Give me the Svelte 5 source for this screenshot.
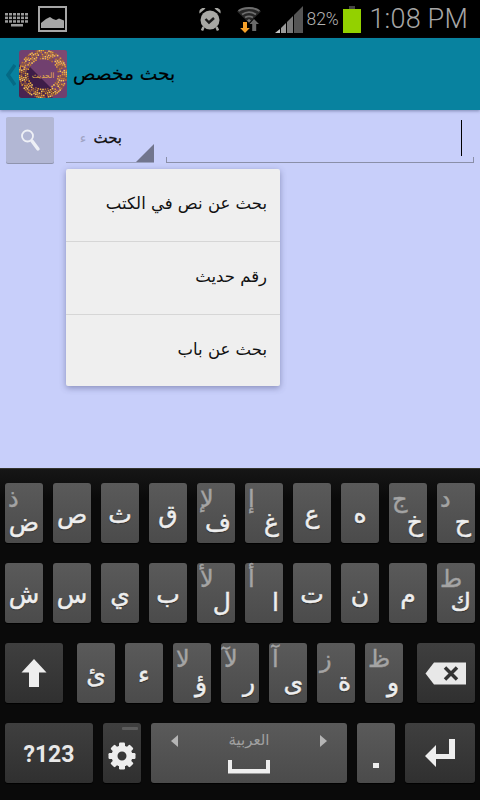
<script>
  const row1 = [['ض','ذ'],['ص'],['ث'],['ق'],['ف','لإ'],['غ','إ'],['ع'],['ه'],['خ','ج'],['ح','د']];
  const row2 = [['ش'],['س'],['ي'],['ب'],['ل','لأ'],['ا','أ'],['ت'],['ن'],['م'],['ك','ط']];
  const row3 = [['ئ'],['ء'],['ؤ','لا'],['ر','لآ'],['ى','آ'],['ة','ز'],['و','ظ']];
  const items = ['بحث عن نص في الكتب','رقم حديث','بحث عن باب'];
  const dots = [];
  const golds = ['#f7c65a', '#e09a30', '#c27a2e', '#f2b13f', '#8f5a3a'];
  for (let r = 0; r < 5; r++) {
    const rad = 15.5 + r * 2;
    const n = 40 + r * 9;
    for (let i = 0; i < n; i++) {
      if ((i * 13 + r * 5) % 7 === 0) continue;
      const a = (i / n) * Math.PI * 2 + r * 0.23;
      dots.push({
        x: 24 + Math.cos(a) * rad,
        y: 24 + Math.sin(a) * rad,
        c: golds[(i * 3 + r * 2) % 5]
      });
    }
  }
</script>

<div class="page">
  <div class="status">
    <svg class="kbd-ic" width="24" height="14" viewBox="0 0 24 14">
      <g fill="#9a9a9a">
        {#each [0,1,2,3,4,5] as i}
          <rect x={i * 4} y="0" width="3" height="2.500"/>
          <rect x={i * 4} y="3.600" width="3" height="2.500"/>
          <rect x={i * 4} y="7.200" width="3" height="2.500"/>
        {/each}
        <rect x="6" y="11" width="12" height="2.500"/>
      </g>
    </svg>
    <svg class="pic-ic" width="29" height="26" viewBox="0 0 29 26">
      <rect x="1" y="1" width="27" height="24" fill="none" stroke="#a6a6a6" stroke-width="2"/>
      <path d="M3 22V17L8 13L12 11L15 13L18 14L21 12.500L26 14.500V22Z" fill="#a6a6a6"/>
    </svg>
    <div class="spacer"></div>
    <svg class="alarm" width="24" height="26" viewBox="0 0 24 26">
      <path d="M1.500 7.500C0.500 3.500 4 1 7.500 2.500ZM22.500 7.500C23.500 3.500 20 1 16.500 2.500Z" fill="#a8a8a4"/>
      <circle cx="12" cy="14" r="9.500" fill="#a8a8a4"/>
      <path d="M7.500 13L11 16.500L16 12" fill="none" stroke="#1a1a1a" stroke-width="2.400"/>
      <path d="M5.500 21L4 24.500M18.500 21L20 24.500" stroke="#a8a8a4" stroke-width="2.500"/>
    </svg>
    <svg class="wifi" width="26" height="28" viewBox="0 0 26 28">
      <path d="M1 5.500C7 -0.500 19 -0.500 25 5.500L13 17Z" fill="#262626"/>
      <g fill="none" stroke="#6e6e6e" stroke-width="1.800">
        <path d="M2.500 5C8 1 18 1 23.500 5"/>
        <path d="M6 8.500C10.500 5.500 15.500 5.500 20 8.500"/>
        <path d="M9 11.500C11.500 10 14.500 10 17 11.500"/>
      </g>
      <path d="M11 14.500L13 13L15 14.500L13 16.500Z" fill="#777"/>
      <path d="M18 13L23 18H20.200V25H16.200V18H13.500Z" fill="#6a6a6a"/>
      <path d="M7 16H11V22H13.800L9 27L4.200 22H7Z" fill="#f5a02a"/>
    </svg>
    <svg class="signal" width="28" height="28" viewBox="0 0 28 28">
      <path d="M28 0V27H19V9Z" fill="#555"/>
      <path d="M18 10V27H12V16Z" fill="#7a7a7a"/>
      <path d="M11 17V27H6V22Z" fill="#9a9a9a"/>
      <path d="M5 23V27H0Z" fill="#c4c4c4"/>
    </svg>
    <span class="pct">82%</span>
    <div class="battery"><i></i><b></b></div>
    <span class="time">1:08 PM</span>
  </div>

  <div class="header">
    <svg class="back" width="10" height="22" viewBox="0 0 10 22">
      <path d="M9 1L2 11L9 21" fill="none" stroke="#056a85" stroke-width="3.500"/>
    </svg>
    <svg class="logo" width="48" height="48" viewBox="0 0 48 48">
      <rect width="48" height="48" rx="3" fill="#71406f"/>
      <path d="M0 14L34 48H3A3 3 0 0 1 0 45Z" fill="#4a2450"/>
      <path d="M10 16L38 44L20 44L4 28Z" fill="#3d1d48"/>
      <path d="M26 0H45A3 3 0 0 1 48 3V24Z" fill="#7e4a72"/>
      {#each dots as d}
        <rect x={d.x - 0.8} y={d.y - 0.8} width="1.600" height="1.600" fill={d.c}/>
      {/each}
      <text x="24" y="28" text-anchor="middle" class="logotext">الحديث</text>
    </svg>
    <span class="title" dir="rtl">بحث مخصص</span>
  </div>

  <div class="content">
    <div class="searchrow">
      <div class="searchbtn">
        <svg width="30" height="32" viewBox="0 0 30 32">
          <circle cx="12.500" cy="12" r="5.500" fill="none" stroke="#eef0f6" stroke-width="1.800"/>
          <path d="M17 17L23 25" stroke="#eef0f6" stroke-width="3.400" stroke-linecap="round"/>
        </svg>
      </div>
      <div class="spinner">
        <span class="spin-text"><span class="fade">ء</span><span class="spin-main">بحث</span></span>
        <div class="tri"></div>
      </div>
      <div class="input"><div class="cursor"></div></div>
    </div>
    <div class="menu" dir="rtl">
      {#each items as it}
        <div class="item">{it}</div>
      {/each}
    </div>
  </div>

  <div class="keyboard">
    <div class="row">
      {#each row1 as k}
        <div class="key" class:hinted={k[1]}>
          {#if k[1]}<span class="hint">{k[1]}</span>{/if}
          <span class="main">{k[0]}</span>
        </div>
      {/each}
    </div>
    <div class="row">
      {#each row2 as k}
        <div class="key" class:hinted={k[1]}>
          {#if k[1]}<span class="hint">{k[1]}</span>{/if}
          <span class="main">{k[0]}</span>
        </div>
      {/each}
    </div>
    <div class="row gap3">
      <div class="key fn shift">
        <svg width="26" height="30" viewBox="0 0 26 30"><path d="M13 1L25.500 14.500H18V29H8V14.500H0.500Z" fill="#eeeeee"/></svg>
      </div>
      <div class="trio">
        {#each row3 as k}
          <div class="key" class:hinted={k[1]}>
            {#if k[1]}<span class="hint">{k[1]}</span>{/if}
            <span class="main">{k[0]}</span>
          </div>
        {/each}
      </div>
      <div class="key fn shift del">
        <svg width="42" height="24" viewBox="0 0 42 24">
          <path d="M9 0.500H41V22.500H9L0.500 11.500Z" fill="#e8e8e8"/>
          <path d="M20 5.500L32 17.500M32 5.500L20 17.500" stroke="#333" stroke-width="3.500"/>
        </svg>
      </div>
    </div>
    <div class="row">
      <div class="key fn sym">?123</div>
      <div class="key fn gear">
        <i class="dash"></i>
        <svg width="28" height="28" viewBox="0 0 28 28">
          <g fill="#eee">
            {#each [0,45,90,135,180,225,270,315] as a}
              <rect x="11" y="0.500" width="6" height="7" rx="1.200" transform="rotate({a} 14 14)"/>
            {/each}
          </g>
          <circle cx="14" cy="14" r="7.500" fill="none" stroke="#eee" stroke-width="6"/>
        </svg>
      </div>
      <div class="key space">
        <svg class="arrow l" width="7" height="12" viewBox="0 0 7 12"><path d="M7 0V12L0 6Z" fill="#b5b5b5"/></svg>
        <span class="lang">العربية</span>
        <svg class="arrow r" width="7" height="12" viewBox="0 0 7 12"><path d="M0 0V12L7 6Z" fill="#b5b5b5"/></svg>
        <svg class="bar" width="42" height="14" viewBox="0 0 42 14"><path d="M0 0H4V9H38V0H42V13.500H0Z" fill="#eee"/></svg>
      </div>
      <div class="key dot"><i></i></div>
      <div class="key fn enter">
        <svg width="32" height="28" viewBox="0 0 32 28">
          <path d="M25 0H31V20H12V28L1 17L12 6V15H25Z" fill="#eee"/>
        </svg>
      </div>
    </div>
  </div>
</div>

<style>
  :global(body) { margin: 0; background: #000; }
  .page {
    width: 480px; height: 800px; display: flex; flex-direction: column; overflow: hidden;
    font-family: "DejaVu Sans", sans-serif;
  }
  .status {
    height: 38px; flex: none; background: #000; display: flex; align-items: center;
    padding: 0 12px 0 5px; box-sizing: border-box;
  }
  .kbd-ic { margin-right: 9px; margin-top: 1px; }
  .spacer { flex: 1; }
  .alarm { margin-right: 14px; }
  .wifi { margin-right: 13px; margin-top: 2px; }
  .signal { margin-right: 3px; margin-top: 1px; }
  .pct { font: 300 17.500px Roboto, sans-serif; color: #b2b2b2; width: 37px; }
  .battery { width: 18px; height: 27px; display: flex; flex-direction: column; align-items: center; margin-right: 8px; }
  .battery i { width: 6px; height: 3px; background: #444; display: block; }
  .battery b { width: 18px; flex: 1; background: #93d100; display: block; }
  .time { font: 300 27px Roboto, sans-serif; color: #a6a6a6; letter-spacing: 0.2px; white-space: nowrap; }

  .header {
    height: 72px; flex: none; background: #08829f; display: flex; align-items: center;
    padding-left: 6px; box-sizing: border-box; position: relative; z-index: 1;
    box-shadow: 0 1px 3px rgba(40, 50, 90, .45);
  }
  .back { margin-right: 3px; margin-top: 2px; }
  .logo { margin-right: 6px; }
  .logotext { font-size: 7.500px; fill: #e8b04a; }
  .title { font-size: 18.600px; color: #000; line-height: 1; -webkit-text-stroke: 0.2px #000; }

  .content { flex: 1; background: #c8cffa; position: relative; padding: 7px 6px 0; box-sizing: border-box; }
  .searchrow { display: flex; align-items: flex-start; }
  .searchbtn {
    width: 48px; height: 46px; background: #b2b7d4; border-radius: 2px; flex: none;
    box-shadow: 0 1px 0 #8f94ad; display: flex; align-items: center; justify-content: center;
  }
  .spinner {
    width: 88px; height: 46px; margin-left: 12px; flex: none; border-bottom: 1px solid #9aa0bf;
    box-sizing: border-box; position: relative; display: flex; align-items: center; justify-content: flex-end;
    padding: 0 32px 4px 0;
  }
  .spin-text { display: flex; align-items: center; gap: 7px; font-size: 15px; white-space: nowrap; }
  .spin-main { color: #111; -webkit-text-stroke: 0.3px #111; }
  .fade { color: #a0a4c4; font-size: 14px; }
  .tri {
    position: absolute; right: 0; bottom: 0; width: 0; height: 0;
    border-left: 18px solid transparent; border-bottom: 18px solid #71758d;
  }
  .input {
    flex: 1; height: 46px; margin-left: 12px; position: relative; box-sizing: border-box;
    border: 1px solid #8a8fa8; border-top: 0;
  }
  .input::before {
    content: ""; position: absolute; left: -1px; right: -1px; top: 0; height: 40px; background: #c8cffa;
  }
  .cursor { position: absolute; right: 11px; top: 3px; width: 1px; height: 36px; background: #000; }

  .menu {
    position: absolute; left: 66px; top: 59px; width: 214px; height: 217px; background: #efefef;
    border-radius: 2px; box-shadow: 0 2px 6px rgba(60, 65, 110, .45);
    display: flex; flex-direction: column;
  }
  .item {
    height: 73px; box-sizing: border-box; flex: none; display: flex; align-items: center; padding: 0 13px 3px;
    font-size: 16.500px; color: #111; border-bottom: 1px solid #d6d6d6; white-space: nowrap;
  }
  .item:last-child { border-bottom: 0; height: 71px; }

  .keyboard {
    height: 332px; flex: none; box-sizing: border-box; padding: 14px 5px 0;
    border-top: 1px solid #33332e;
    background: linear-gradient(#161616 0, #0a0a0a 30px, #0a0a0a 100%);
    display: flex; flex-direction: column; gap: 20px;
  }
  .row { display: flex; gap: 10px; height: 60px; flex: none; }
  .row.gap3 { gap: 14px; }
  .trio { display: flex; gap: 10px; }
  .key {
    width: 38px; height: 60px; flex: none; box-sizing: border-box; border-radius: 3px;
    background: linear-gradient(#5a5a5a, #4b4b4b);
    display: flex; align-items: center; justify-content: center; color: #eee;
    position: relative; box-shadow: 0 1px 1px #000;
  }
  .main {
    font-size: 25px; line-height: 1; padding-top: 3px; text-shadow: 0 1px 1px #222;
    -webkit-text-stroke: 0.5px #eee;
  }
  .hinted { display: block; }
  .hint {
    position: absolute; left: 3px; top: 5px; font-size: 24px; line-height: 22px; color: #a4a4a4;
    -webkit-text-stroke: 0.4px #a4a4a4;
  }
  .hinted .main { position: absolute; right: 4px; bottom: 7px; padding: 0; line-height: 26px; height: 26px; }
  .fn { background: linear-gradient(#3f3f3f, #303030); }
  .shift { width: 58px; }
  .del svg { margin-top: 2px; }
  .sym { width: 88px; font: 700 23px Roboto, sans-serif; color: #e8e8e8; padding-top: 3px; }
  .gear .dash { position: absolute; right: 3px; top: 4px; width: 16px; height: 3px; border-radius: 1px; background: #5c5c5c; }
  .gear svg { margin-top: 5px; }
  .space { width: 196px; }
  .arrow { position: absolute; top: 12px; }
  .arrow.l { left: 20px; }
  .arrow.r { right: 20px; }
  .lang {
    position: absolute; top: 8px; left: 0; right: 0; text-align: center; font-size: 15px; color: #a0a0a0; line-height: 1.2;
  }
  .bar { position: absolute; bottom: 9px; left: 77px; }
  .dot i { position: absolute; left: 16px; top: 40px; width: 6px; height: 5px; background: #eee; }
  .enter { width: 70px; }
</style>
